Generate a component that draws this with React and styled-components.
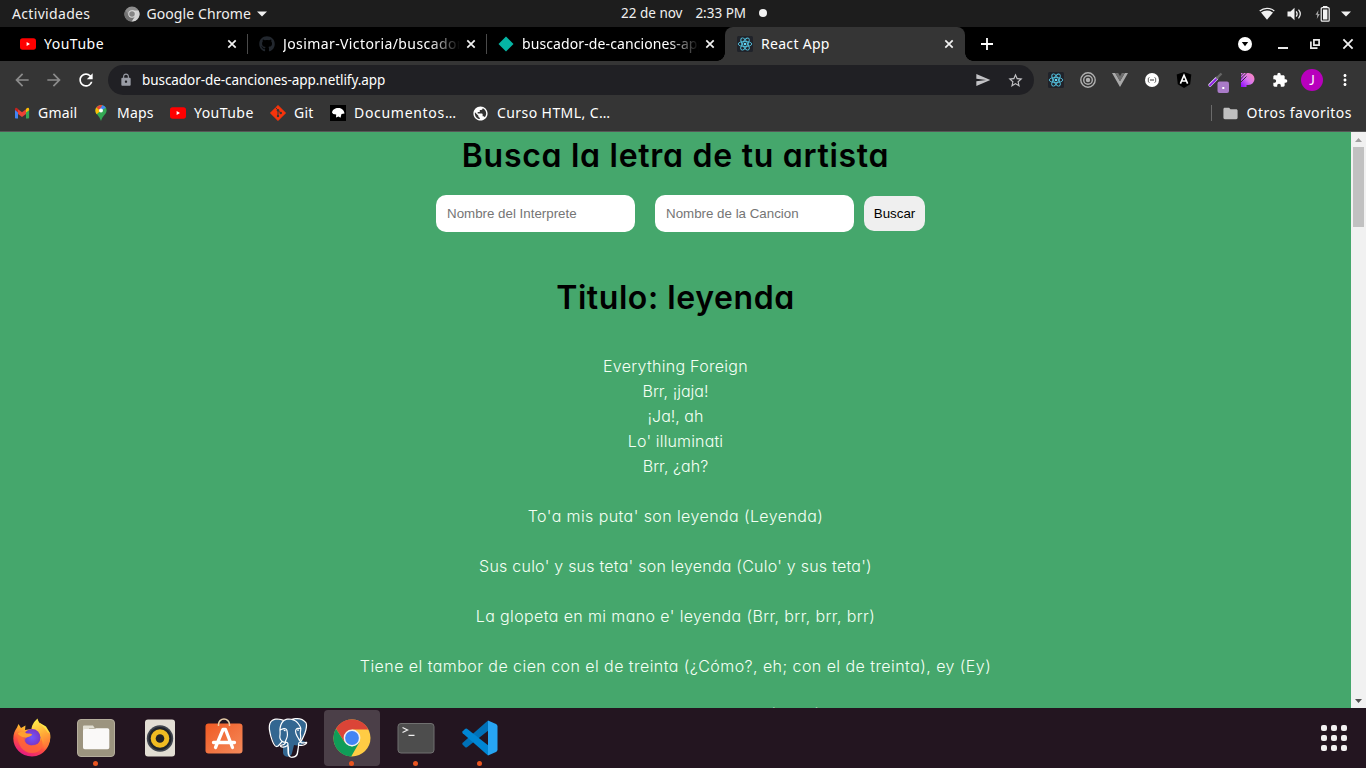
import React from "react";
import styled, { createGlobalStyle } from "styled-components";
import { FaGithub } from "react-icons/fa";
import { SiPostgresql } from "react-icons/si";
import { MdRefresh, MdArrowBack, MdArrowForward, MdLock, MdSend, MdStarBorder, MdExtension, MdMoreVert, MdFolder, MdPublic } from "react-icons/md";

const GlobalStyle = createGlobalStyle`
  * { box-sizing: border-box; }
  body { margin: 0; background: #000; overflow: hidden; }
  svg { display: block; flex: none; }
`;

const Screen = styled.div`
  width: 1366px;
  height: 768px;
  display: flex;
  flex-direction: column;
  overflow: hidden;
  font-family: "Noto Sans", sans-serif;
  font-size: 14px;
  color: #fff;
`;

const Label = styled.span`
  white-space: nowrap;
  line-height: 20px;
  letter-spacing: ${(p) => p.$track || 0}px;
  font-size: ${(p) => p.$size || 14}px;
`;

/* ---------- system bar ---------- */
const SystemBar = styled.header`
  height: 27px;
  flex: none;
  display: flex;
  align-items: center;
  background: #1d1d1d;
  color: #f0f0f0;
`;
const SystemLeft = styled.div`
  width: 621px;
  padding-left: 12px;
  display: flex;
  align-items: center;
`;
const AppMenu = styled.div`
  margin-left: 34px;
  display: flex;
  align-items: center;
  gap: 6px;
`;
const Clock = styled.div`
  display: flex;
  align-items: center;
  width: 146px;
  justify-content: space-between;
  padding-bottom: 1px;
`;
const ClockDot = styled.i`
  width: 8px;
  height: 8px;
  border-radius: 50%;
  background: #f2f2f2;
`;
const Tray = styled.div`
  margin-left: auto;
  padding-right: 15px;
  display: flex;
  align-items: center;
`;
const Spacer = styled.i`
  width: ${(p) => p.$w}px;
  flex: none;
`;

/* ---------- tabs ---------- */
const TabStrip = styled.div`
  height: 34px;
  flex: none;
  display: flex;
  padding-left: 8px;
  background: #000;
`;
const TabBox = styled.div`
  width: ${(p) => (p.$active ? 240 : 239)}px;
  height: 34px;
  display: flex;
  align-items: center;
  gap: 8px;
  padding: 0 10px 0 12px;
  position: relative;
  background: ${(p) => (p.$active ? "#353535" : "transparent")};
  border-radius: 8px 8px 0 0;
  ${(p) => p.$divider && "&::after{content:'';position:absolute;right:-1px;top:7px;width:1px;height:20px;background:#4a4a4a;}"}
  ${(p) =>
    p.$active &&
    `&::before,&::after{content:'';position:absolute;bottom:0;width:8px;height:8px;}
     &::before{left:-8px;background:radial-gradient(circle at 0 0,transparent 7.5px,#353535 8px);}
     &::after{right:-8px;background:radial-gradient(circle at 100% 0,transparent 7.5px,#353535 8px);}`}
`;
const TabTitle = styled(Label)`
  width: 177px;
  flex: none;
  overflow: hidden;
  ${(p) => p.$fade && "mask-image: linear-gradient(90deg,#000 146px,transparent 177px);"}
`;
const TabClose = styled.div`
  width: 12px;
  margin-left: -3px;
`;
const WindowButtons = styled.div`
  margin-left: auto;
  display: flex;
  align-items: center;
  padding-right: 12px;
`;
const NewTab = styled.div`
  display: flex;
  align-items: center;
  margin-left: 16px;
`;

/* ---------- toolbar ---------- */
const Toolbar = styled.div`
  height: 38px;
  flex: none;
  display: flex;
  align-items: center;
  background: #353535;
  padding-left: 12px;
`;
const NavButtons = styled.div`
  width: 96px;
  display: flex;
  gap: 12px;
`;
const Omnibox = styled.div`
  width: 926px;
  height: 30px;
  border-radius: 15px;
  background: #202024;
  display: flex;
  align-items: center;
  padding: 0 10px 0 11px;
`;
const Url = styled(Label)`
  margin-left: 9px;
  flex: 1;
`;
const Extensions = styled.div`
  display: flex;
  align-items: center;
  gap: 16px;
  margin-left: 14px;
`;
const Avatar = styled.div`
  width: 22px;
  height: 22px;
  margin: 0 -3px;
  border-radius: 50%;
  background: #b800bd;
  display: flex;
  align-items: center;
  justify-content: center;
  font: 13px Lato, sans-serif;
`;

/* ---------- bookmarks ---------- */
const Bookmarks = styled.nav`
  height: 33px;
  flex: none;
  display: flex;
  align-items: center;
  background: #353535;
  border-bottom: 1px solid #575757;
  padding: 0 14px 4px;
`;
const Bookmark = styled.div`
  display: flex;
  align-items: center;
  gap: 8px;
  width: ${(p) => p.$w}px;
`;
const OtherBookmarks = styled.div`
  margin-left: auto;
  display: flex;
  align-items: center;
  gap: 8px;
  border-left: 1px solid #6b6b6b;
  height: 16px;
  padding-left: 10px;
`;

/* ---------- page ---------- */
const Viewport = styled.div`
  height: 576px;
  flex: none;
  display: flex;
  overflow: hidden;
`;
const Page = styled.main`
  width: 1351px;
  height: 576px;
  overflow: hidden;
  background: #45a76c;
  display: flex;
  flex-direction: column;
  align-items: center;
  font-family: Inter, sans-serif;
`;
const Heading = styled.h1`
  margin: ${(p) => p.$top}px 0 0;
  font-size: 32px;
  line-height: 48px;
  height: 48px;
  font-weight: 600;
  color: #000;
  white-space: nowrap;
  letter-spacing: ${(p) => p.$track}px;
  font-feature-settings: "cv11", "ss03";
`;
const SearchForm = styled.form`
  display: flex;
  align-items: center;
  height: 37px;
  margin: 15px 0 0 10px;
`;
const Field = styled.input`
  width: 199px;
  height: 37px;
  margin-right: ${(p) => p.$gap}px;
  padding: 0 11px;
  border: 0;
  border-radius: 10px;
  background: #fff;
  font: 13.333px "Liberation Sans", sans-serif;
  &::placeholder { color: #757575; }
`;
const SearchButton = styled.button`
  width: 61px;
  height: 35px;
  padding: 0;
  border: 0;
  border-radius: 10px;
  background: #efefef;
  color: #000;
  font: 13.333px "Liberation Sans", sans-serif;
`;
const Lyrics = styled.div`
  margin-top: 32px;
  display: flex;
  flex-direction: column;
  align-items: center;
`;
const Verse = styled.p`
  margin: 0;
  height: 25px;
  line-height: 25px;
  font-size: 16px;
  font-weight: 300;
  color: #f4fff4;
  white-space: nowrap;
  letter-spacing: ${(p) => p.$track || 0}px;
  font-feature-settings: "cv11";
  &:last-child { margin-top: -2px; }
`;
const Scrollbar = styled.div`
  width: 15px;
  background: #f1f1f1;
  display: flex;
  flex-direction: column;
  align-items: center;
  justify-content: space-between;
`;
const ScrollThumb = styled.div`
  width: 11px;
  height: 80px;
  background: #c1c1c1;
  margin-bottom: auto;
`;

/* ---------- dock ---------- */
const Dock = styled.footer`
  height: 60px;
  flex: none;
  display: flex;
  align-items: center;
  gap: 8px;
  padding-left: 4px;
  background: #231520;
`;
const DockItem = styled.div`
  width: 56px;
  height: 56px;
  border-radius: 4px;
  display: flex;
  align-items: center;
  justify-content: center;
  position: relative;
  background: ${(p) => (p.$active ? "#4b3f48" : "transparent")};
  ${(p) => p.$running && "&::after{content:'';position:absolute;left:25px;bottom:0;width:5px;height:5px;border-radius:50%;background:#e95420;}"}
`;
const AppGrid = styled.div`
  margin-left: auto;
  margin-right: 19px;
  display: grid;
  grid-template-columns: repeat(3, 6px);
  gap: 4px;
`;
const GridDot = styled.i`
  width: 6px;
  height: 6px;
  border-radius: 2px;
  background: #f2f0f1;
`;

/* ---------- drawings ---------- */
const Cross = ({ size = 12, reach = 3.7, w = 1.7 }) => (
  <svg width={size} height={size} viewBox="-6 -6 12 12">
    <path d={`M${-reach} ${-reach}L${reach} ${reach}M${reach} ${-reach}L${-reach} ${reach}`} stroke="#f1f1f1" strokeWidth={w} />
  </svg>
);
const YouTubeIcon = () => (
  <svg width="16" height="16" viewBox="0 0 16 16">
    <rect y="2.3" width="16" height="11.4" rx="2.6" fill="#f00" />
    <path d="M6.600 6.100v3.800l3.400-1.900z" fill="#fff" />
  </svg>
);
const ReactIcon = ({ bg = "#20232a" }) => (
  <svg width="16" height="16" viewBox="0 0 16 16">
    <rect width="16" height="16" rx="1.5" fill={bg} />
    <g fill="none" stroke="#53c1de" strokeWidth=".9">
      <ellipse cx="8" cy="8" rx="6.8" ry="2.6" />
      <ellipse cx="8" cy="8" rx="6.8" ry="2.6" transform="rotate(60 8 8)" />
      <ellipse cx="8" cy="8" rx="6.8" ry="2.6" transform="rotate(120 8 8)" />
    </g>
    <circle cx="8" cy="8" r="1.3" fill="#61dafb" />
  </svg>
);
const ChromeGray = () => (
  <svg width="16" height="16" viewBox="0 0 16 16">
    <circle cx="8" cy="8" r="7.6" fill="#8d8d8d" />
    <path d="M8 4.4h6.6A7.6 7.6 0 0 1 7.6 15.6L11 10z" fill="#d2d2d2" />
    <path d="M1.4 4.2A7.6 7.6 0 0 0 7.6 15.6L11 10 5 10z" fill="#727272" />
    <circle cx="8" cy="8" r="3.7" fill="#ddd" />
    <circle cx="8" cy="8" r="2.8" fill="#858585" />
  </svg>
);
const Caret = () => (
  <svg width="10" height="6" viewBox="0 0 10 6"><path d="M0 .5h10L5 5.5z" fill="#f0f0f0" /></svg>
);
const WifiIcon = () => (
  <svg width="16" height="14" viewBox="0 0 16 14">
    <path d="M.7 4C5 .4 11 .4 15.300 4" fill="none" stroke="#f0f0f0" strokeWidth="1.300" />
    <path d="M2 5.500c3.600-2.700 8.400-2.700 12 0L8 12.800z" fill="#f0f0f0" />
  </svg>
);
const VolumeIcon = () => (
  <svg width="16" height="14" viewBox="0 0 16 14">
    <path d="M.5 4.500h3L7.500.8v12.400L3.500 9.500h-3z" fill="#f0f0f0" />
    <path d="M9.200 4.300q2 2.700 0 5.400M11.500 2.700q3.600 4.300 0 8.600" fill="none" stroke="#f0f0f0" strokeWidth="1.200" />
  </svg>
);
const BatteryIcon = () => (
  <svg width="15" height="16" viewBox="0 0 15 16">
    <path d="M3.500 4 .5 8.800h1.800L1.800 13l3-5H3z" fill="#a4a4a4" />
    <path d="M8 0h4.400v2H8z" fill="#f0f0f0" />
    <rect x="6.200" y="1.700" width="8" height="13.500" rx="1" fill="none" stroke="#f0f0f0" strokeWidth="1.200" />
    <rect x="8" y="3.500" width="4.400" height="10" fill="#f0f0f0" />
  </svg>
);
const GmailIcon = () => (
  <svg width="16" height="16" viewBox="0 0 16 16">
    <path d="M1 4v8.700q0 .8.800.8H4V6z" fill="#4285f4" />
    <path d="M12 6v7.500h2.300q.8 0 .8-.8V4z" fill="#34a853" />
    <path d="M4 9V4.300l4 3 4-3V9l-4 3z" fill="#ea4335" />
    <path d="M1 5V4q.3-2 2-1l1 .9v3.700z" fill="#c5221f" />
    <path d="M12 7.600V3.900L13 3q1.800-1 2.100 1v1.200z" fill="#fbbc04" />
  </svg>
);
const MapsIcon = () => (
  <svg width="16" height="16" viewBox="0 0 16 16">
    <path d="M8 0C4.600 0 2.400 2.400 2.400 5.500c0 3.800 4 5 5.600 10.500 1.600-5.500 5.600-6.700 5.600-10.500C13.600 2.400 11.400 0 8 0z" fill="#34a853" />
    <path d="M3.400 2.500 8 5.500 3.600 9.300C1.800 6.800 2.200 4 3.400 2.500z" fill="#fbbc04" />
    <path d="M3.400 2.500 6.500 5 9.500.2C7-.4 4.700.7 3.400 2.500z" fill="#ea4335" />
    <path d="M9.500.2 6 5l2 .500 4.800-2.700A5.500 5.500 0 0 0 9.500.2z" fill="#4285f4" />
    <circle cx="8" cy="5.500" r="2" fill="#fff" />
  </svg>
);
const GitIcon = () => (
  <svg width="16" height="16" viewBox="0 0 16 16">
    <path d="M8 .2 15.800 8 8 15.800.2 8z" fill="#f7340c" stroke="#f7340c" strokeWidth=".5" strokeLinejoin="round" />
    <path d="M5.600 2.700 8 5v6M8 5.500 10.800 8" fill="none" stroke="#353535" strokeWidth="1" />
    <circle cx="8" cy="5.200" r="1.200" fill="#353535" /><circle cx="8" cy="11" r="1.200" fill="#353535" /><circle cx="10.800" cy="8" r="1.200" fill="#353535" />
  </svg>
);
const DocIcon = () => (
  <svg width="16" height="16" viewBox="0 0 16 16">
    <rect width="16" height="16" fill="#000" />
    <path d="M2 7.500C2.500 4.500 5.500 2.800 8.500 3c3.500 0 5.800 2.500 6 5.500L11.500 9 10.500 12.800 8.500 11.500 6 12.600 6.200 9.500 3.200 9z" fill="#fff" />
  </svg>
);
const VueIcon = () => (
  <svg width="16" height="16" viewBox="0 0 16 16">
    <path d="M0 1h3.200L8 9.300 12.800 1H16L8 15z" fill="#a9a9a9" />
    <path d="M3.200 1h3L8 4.200 9.800 1h3L8 9.300z" fill="#6e6e6e" />
  </svg>
);
const TargetIcon = () => (
  <svg width="16" height="16" viewBox="0 0 16 16" fill="none" stroke="#b0b0b0" strokeWidth="1.400">
    <circle cx="8" cy="8" r="7.200" /><circle cx="8" cy="8" r="4.300" /><circle cx="8" cy="8" r="1.500" fill="#b0b0b0" />
  </svg>
);
const JsonIcon = () => (
  <svg width="16" height="16" viewBox="0 0 16 16">
    <circle cx="8" cy="8" r="7" fill="#fff" />
    <path d="M5.500 5.500Q3.800 5.600 4.300 8q-.5 2.400 1.200 2.500M10.500 5.500Q12.200 5.600 11.700 8q.5 2.400-1.200 2.500" fill="none" stroke="#555" strokeWidth=".9" />
    <path d="M6 8h4" stroke="#333" strokeWidth="1" />
  </svg>
);
const AngularIcon = () => (
  <svg width="16" height="16" viewBox="0 0 16 16">
    <path d="M8 0l7.300 2.600-1.100 9.700L8 16l-6.200-3.700L.7 2.600z" fill="#000" />
    <path d="M4.400 11.600 8 3.200l3.600 8.400M5.700 9h4.600" fill="none" stroke="#fff" strokeWidth="1.600" />
  </svg>
);
const WandIcon = () => (
  <svg width="22" height="21" viewBox="0 0 22 21">
    <path d="M2 13 8.500 6.500" stroke="#e8defa" strokeWidth="3.200" strokeLinecap="round" />
    <path d="M2 13.200 8 7.200" stroke="#8a1fe0" strokeWidth="2" strokeLinecap="round" />
    <path d="M8.500 6.500 13.500 1.500" stroke="#666" strokeWidth="2.400" />
    <rect x="9.500" y="9.500" width="11.500" height="11.500" rx="2" fill="#a97bc8" />
    <rect x="14.300" y="15" width="2" height="2" fill="#fff" />
  </svg>
);
const WandSlot = styled.div`
  width: 16px;
  height: 16px;
  overflow: visible;
`;
const PIcon = () => (
  <svg width="16" height="16" viewBox="0 0 16 16">
    <defs>
      <linearGradient id="pg" x1="1" y1="0" x2="0" y2="1"><stop offset="0" stopColor="#ff8bb5" /><stop offset=".5" stopColor="#d976ee" /><stop offset="1" stopColor="#8a00ff" /></linearGradient>
    </defs>
    <path d="M1 1h7.500a6 6 0 0 1 0 12H6.500v2H1z" fill="url(#pg)" />
    <path d="M0 4.500 4.500 0M0 7.500 7.500 0M1 10 6.500 4.500" stroke="#353535" strokeWidth="1" />
  </svg>
);
const ScrollArrow = ({ down }) => (
  <svg width="15" height="15" viewBox="0 0 15 15">
    <path d={down ? "M4 6h7L7.500 10z" : "M4 10h7L7.500 6z"} fill={down ? "#505050" : "#a0a0a0"} />
  </svg>
);

const FirefoxIcon = () => (
  <svg width="40" height="40" viewBox="0 0 40 40">
    <defs>
      <linearGradient id="ff1" x1=".8" y1="0" x2=".3" y2="1"><stop offset="0" stopColor="#fff44f" /><stop offset=".35" stopColor="#ffb02e" /><stop offset=".65" stopColor="#ff4f3f" /><stop offset="1" stopColor="#e31587" /></linearGradient>
      <linearGradient id="ff2" x1=".3" y1="0" x2=".6" y2="1"><stop offset="0" stopColor="#fff04a" /><stop offset=".6" stopColor="#ffa436" /><stop offset="1" stopColor="#ff7139" /></linearGradient>
      <radialGradient id="ff3"><stop offset="0" stopColor="#6f57ff" /><stop offset="1" stopColor="#7c35c4" /></radialGradient>
    </defs>
    <path d="M5 9.500 6.500 6 9 10 13.500 7.500 13 12 25 10 28 5 34 8.500 38 15C40 27 32 38.500 20 38.500 9 38.500 1.300 30 1.300 20.500 1.300 16 3 12 5 9.500z" fill="url(#ff1)" />
    <path d="M19.500 11 C20 6 23 3 25.500.5 26.500 6 33 9 36 15l1.500-.5C39.500 21 37 28 32 31c2-9-4-12-5-18z" fill="url(#ff2)" />
    <circle cx="20" cy="19.500" r="8.500" fill="url(#ff3)" />
    <path d="M5 15c4-2 7-1 9 .5 2 0 5-.5 6 1-2 2-4 1.500-6 3.500-3 4 2 8 7 7 5 0 8-3 8-7 4 9-1 15-9 15C11 35 5 27 5 15z" fill="#ff6a35" opacity=".75" />
    <path d="M5.500 15.500c3-2.500 7-2 9 0 2 .3 5 0 5.700 1.200-1 1.800-4 1.800-5.700 2.800-3 .500-6.500-1-9-4z" fill="#ffa02f" />
  </svg>
);
const FilesIcon = () => (
  <svg width="40" height="40" viewBox="0 0 40 40">
    <rect x="1.500" y="1.500" width="37" height="37" rx="3.500" fill="#9c947f" stroke="#b5ae9d" />
    <path d="M7 8.500Q7 7.500 8 7.500h9l2 3h-6v4H7z" fill="#e2dfd3" />
    <path d="M7 13q0-2 2-2h9q1 0 2-.700h11.500q1.800 0 1.800 1.800v17.400q0 1.800-1.800 1.800H8.800Q7 31.300 7 29.500z" fill="#faf9f8" />
  </svg>
);
const SpeakerIcon = () => (
  <svg width="40" height="40" viewBox="0 0 40 40">
    <rect x="5" y="1.500" width="30" height="37" rx="3" fill="#e3ded4" />
    <circle cx="20" cy="20.500" r="13.200" fill="#40454e" /><circle cx="20" cy="20.500" r="11.500" fill="#20242b" />
    <circle cx="20" cy="20.500" r="9.300" fill="#efbb22" /><circle cx="20" cy="20.500" r="4.300" fill="#202124" />
  </svg>
);
const StoreIcon = () => (
  <svg width="40" height="40" viewBox="0 0 40 40">
    <defs><linearGradient id="st" x1="0" y1="0" x2="1" y2="1"><stop offset="0" stopColor="#f05a23" /><stop offset="1" stopColor="#f48a5b" /></linearGradient></defs>
    <rect x="1.500" y="5.500" width="37" height="30" rx="3" fill="url(#st)" />
    <path d="M14.500 8V6.500a5.500 5.500 0 0 1 11 0V8" fill="none" stroke="#e9cfa8" strokeWidth="1.500" />
    <path d="M11.500 29.500 19 11.500h2.500L28.500 29.500M9.500 24.500h21" fill="none" stroke="#fff" strokeWidth="3.300" strokeLinecap="round" strokeLinejoin="round" />
  </svg>
);
const Elephant = styled.div`
  width: 40px;
  height: 40px;
  display: grid;
  & > svg { grid-area: 1 / 1; }
`;
const PostgresIcon = () => (
  <Elephant>
    <svg width="40" height="40" viewBox="0 0 40 40">
      <path d="M6 2C2 3 0 8 2 14l4 11c2 4 5 5 7 1l2 1v8c1 5 8 5 9 0l2-8c4 1 9 0 12-3l-5-2c4-6 7-14 4-18-4-4-9-3-12-2-4-1-8-1-10 1C12 2 9 1 6 2z" fill="#336791" />
    </svg>
    <SiPostgresql size={40} color="#fff" />
  </Elephant>
);
const ChromeIcon = () => (
  <svg width="40" height="40" viewBox="0 0 40 40">
    <circle cx="20" cy="20" r="18.500" fill="#fc4" />
    <path d="M20 11.500H36.500A18.500 18.500 0 0 0 4 10.700L12.600 24.300z" fill="#db4437" />
    <path d="M4 10.700A18.500 18.500 0 0 0 19.200 38.500L27.400 24.300 20 28.500 12.600 24.300z" fill="#0f9d58" />
    <circle cx="20" cy="20" r="8.400" fill="#f1f1f1" /><circle cx="20" cy="20" r="6.900" fill="#4285f4" />
  </svg>
);
const TerminalIcon = () => (
  <svg width="40" height="40" viewBox="0 0 40 40">
    <rect x="2" y="5.500" width="36" height="29.500" rx="3" fill="#4d4d4d" stroke="#707070" />
    <path d="M6.500 9.500l5 2.500-5 2.500M12.500 17.300h6" fill="none" stroke="#f0f0f0" strokeWidth="1.300" />
  </svg>
);
const CodeIcon = () => (
  <svg width="40" height="40" viewBox="0 0 40 40">
    <path d="M28 2.500 29 12 7 29.200q-1 .7-2-.2L2.700 26.800q-1-1 0-2z" fill="#0071b8" />
    <path d="M28 37.500 29 28 7 10.800q-1-.7-2 .2L2.700 13.200q-1 1 0 2z" fill="#0086d4" />
    <path d="M28 2.500 36 6q1.500.8 1.500 2.500v23q0 1.700-1.500 2.500l-8 3.500z" fill="#27a5f3" />
  </svg>
);

const tabs = [
  { title: "YouTube", icon: <YouTubeIcon />, divider: true, track: 0.5 },
  { title: "Josimar-Victoria/buscador", icon: <FaGithub size={16} color="#22272e" />, divider: true, fade: true, track: 0.4 },
  { title: "buscador-de-canciones-app", icon: <svg width="16" height="16" viewBox="0 0 16 16"><path d="M8 .5 15.500 8 8 15.500.5 8z" fill="#05b5a4" /></svg>, fade: true, track: 0.1 },
  { title: "React App", icon: <ReactIcon />, active: true, track: 0.3 },
];
const bookmarks = [
  { title: "Gmail", icon: <GmailIcon />, w: 79, track: 0.2 },
  { title: "Maps", icon: <MapsIcon />, w: 77, track: 0.2 },
  { title: "YouTube", icon: <YouTubeIcon />, w: 100, track: 0.45 },
  { title: "Git", icon: <GitIcon />, w: 60, track: 0.2 },
  { title: "Documentos…", icon: <DocIcon />, w: 142, track: 0.7 },
  { title: "Curso HTML, C…", icon: <MdPublic size={17} color="#fff" />, w: 150, track: 0.42 },
];
const verses = [
  ["Everything Foreign", 0.28], ["Brr, ¡jaja!", 0], ["¡Ja!, ah", 0], ["Lo' illuminati", 0.15], ["Brr, ¿ah?", 0.05], [""],
  ["To'a mis puta' son leyenda (Leyenda)", 0.41], [""],
  ["Sus culo' y sus teta' son leyenda (Culo' y sus teta')", 0.23], [""],
  ["La glopeta en mi mano e' leyenda (Brr, brr, brr, brr)", 0.38], [""],
  ["Tiene el tambor de cien con el de treinta (¿Cómo?, eh; con el de treinta), ey (Ey)", 0.44], [""],
  ["Mis enemigo' son leyenda, ah (Yeah)", 0.4],
];
const dock = [
  { icon: <FirefoxIcon /> },
  { icon: <FilesIcon />, running: true },
  { icon: <SpeakerIcon /> },
  { icon: <StoreIcon /> },
  { icon: <PostgresIcon /> },
  { icon: <ChromeIcon />, running: true, active: true },
  { icon: <TerminalIcon />, running: true },
  { icon: <CodeIcon />, running: true },
];

export default function App() {
  return (
    <Screen>
      <GlobalStyle />
      <SystemBar>
        <SystemLeft>
          <Label $track={0.33}>Actividades</Label>
          <AppMenu>
            <ChromeGray />
            <Label $track={0.1}>Google Chrome</Label>
            <Caret />
          </AppMenu>
        </SystemLeft>
        <Clock>
          <Label $size={13.5}>22 de nov</Label>
          <Label $size={13.5}>2:33 PM</Label>
          <ClockDot />
        </Clock>
        <Tray>
          <WifiIcon /><Spacer $w={12} /><VolumeIcon /><Spacer $w={12} /><BatteryIcon /><Spacer $w={11} /><Caret />
        </Tray>
      </SystemBar>

      <TabStrip>
        {tabs.map((t) => (
          <TabBox key={t.title} $active={t.active} $divider={t.divider}>
            {t.icon}
            <TabTitle $fade={t.fade} $track={t.track}>{t.title}</TabTitle>
            <TabClose><Cross /></TabClose>
          </TabBox>
        ))}
        <NewTab>
          <svg width="12" height="12" viewBox="0 0 12 12"><path d="M0 6h12M6 0v12" stroke="#fff" strokeWidth="1.800" /></svg>
        </NewTab>
        <WindowButtons>
          <svg width="14" height="14" viewBox="0 0 14 14"><circle cx="7" cy="7" r="7" fill="#fff" /><path d="M3.800 5h6.400L7 9.300z" fill="#000" /></svg>
          <Spacer $w={26} />
          <svg width="10" height="10" viewBox="0 0 10 10"><path d="M0 9h10" stroke="#e8e8e8" strokeWidth="2" /></svg>
          <Spacer $w={22} />
          <svg width="10" height="10" viewBox="0 0 10 10" fill="none" stroke="#e8e8e8" strokeWidth="1.700"><path d="M3.900.9h5.200v5.200H3.900zM.9 2.500v6.600h6.600" /></svg>
          <Spacer $w={22} />
          <Cross reach={4.6} w={1.8} />
        </WindowButtons>
      </TabStrip>

      <Toolbar>
        <NavButtons>
          <MdArrowBack size={20} color="#8c8c8c" />
          <MdArrowForward size={20} color="#8c8c8c" />
          <MdRefresh size={20} color="#fff" />
        </NavButtons>
        <Omnibox>
          <MdLock size={14} color="#9a9da6" />
          <Url $size={13.5} $track={-0.06}>buscador-de-canciones-app.netlify.app</Url>
          <MdSend size={16} color="#c3c3c6" />
          <Spacer $w={16} />
          <MdStarBorder size={17} color="#c3c3c6" />
        </Omnibox>
        <Extensions>
          <ReactIcon />
          <TargetIcon />
          <VueIcon />
          <JsonIcon />
          <AngularIcon />
          <WandSlot><WandIcon /></WandSlot>
          <PIcon />
          <MdExtension size={16} color="#fff" />
          <Avatar>J</Avatar>
          <MdMoreVert size={18} color="#fff" />
        </Extensions>
      </Toolbar>

      <Bookmarks>
        {bookmarks.map((b) => (
          <Bookmark key={b.title} $w={b.w}>
            {b.icon}
            <Label $track={b.track}>{b.title}</Label>
          </Bookmark>
        ))}
        <OtherBookmarks>
          <MdFolder size={17} color="#c0c0c0" />
          <Label $track={0.48}>Otros favoritos</Label>
        </OtherBookmarks>
      </Bookmarks>

      <Viewport>
        <Page>
          <Heading $top={0} $track={0.72}>Busca la letra de tu artista</Heading>
          <SearchForm>
            <Field $gap={20} placeholder="Nombre del Interprete" />
            <Field $gap={10} placeholder="Nombre de la Cancion" />
            <SearchButton type="button">Buscar</SearchButton>
          </SearchForm>
          <Heading $top={42} $track={0.58}>Titulo: leyenda</Heading>
          <Lyrics>
            {verses.map(([text, track], i) => (
              <Verse key={i} $track={track}>{text}</Verse>
            ))}
          </Lyrics>
        </Page>
        <Scrollbar>
          <ScrollArrow />
          <ScrollThumb />
          <ScrollArrow down />
        </Scrollbar>
      </Viewport>

      <Dock>
        {dock.map((d, i) => (
          <DockItem key={i} $active={d.active} $running={d.running}>{d.icon}</DockItem>
        ))}
        <AppGrid>
          {Array.from({ length: 9 }, (_, i) => <GridDot key={i} />)}
        </AppGrid>
      </Dock>
    </Screen>
  );
}
